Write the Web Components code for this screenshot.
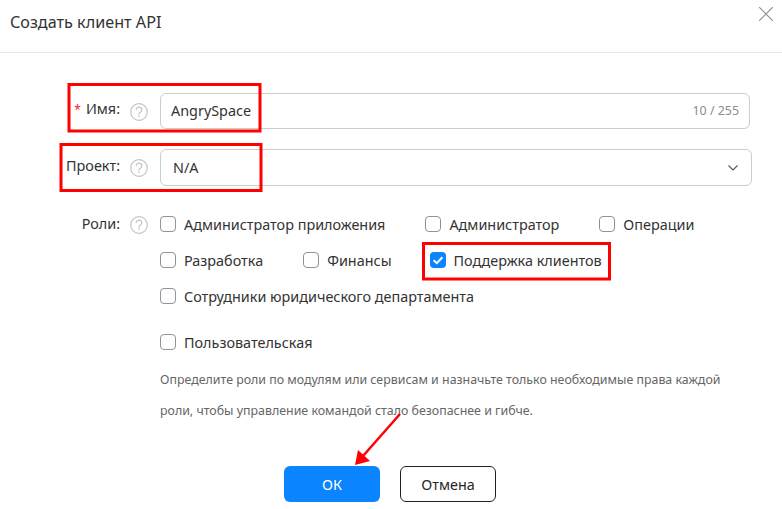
<!DOCTYPE html>
<html lang="ru">
<head>
<meta charset="utf-8">
<title>Создать клиент API</title>
<style>
  html, body { margin: 0; background: #fff; }
  body { font-family: "Noto Sans", "Open Sans", sans-serif; overflow: hidden; }
</style>
</head>
<body>
<api-dialog>
  <form-row label="Имя:" required>
    <text-field value="AngrySpace" count="10 / 255"></text-field>
  </form-row>
  <form-row label="Проект:" gap>
    <select-field value="N/A"></select-field>
  </form-row>
  <form-row label="Роли:" class="roles">
    <role-list>
      <role-check>Администратор приложения</role-check>
      <role-check>Администратор</role-check>
      <role-check>Операции</role-check>
      <role-check>Разработка</role-check>
      <role-check style="margin-right:-2px">Финансы</role-check>
      <role-check checked>Поддержка клиентов</role-check>
      <role-check>Сотрудники юридического департамента</role-check>
    </role-list>
    <custom-role>
      <role-check>Пользовательская</role-check>
      <span slot="hint">Определите роли по модулям или сервисам и назначьте только необходимые права каждой роли, чтобы управление командой стало безопаснее и гибче.</span>
    </custom-role>
  </form-row>
</api-dialog>
<mark-up></mark-up>

<script>
class ApiDialog extends HTMLElement {
  constructor() {
    super();
    this.attachShadow({ mode: 'open' });
    this.shadowRoot.innerHTML = `
      <style>
        :host { display: block; width: 782px; height: 509px; color: #262626; }
        header {
          height: 52px;
          border-bottom: 1px solid #e8e8e8;
          display: flex;
          justify-content: space-between;
          padding: 0 9px 0 10px;
        }
        h1 { margin: 12px 0 0; font-size: 16.2px; font-weight: 400; line-height: 20px; color: #333; }
        svg { margin: 7px 0 0; }
        main { padding: 40px 32px 0 0; }
        footer { display: flex; justify-content: center; gap: 20px; margin-top: 40px; padding-right: 2px; }
        button {
          width: 96px;
          height: 36px;
          box-sizing: border-box;
          border-radius: 6px;
          font: inherit;
          font-size: 14.4px;
          padding: 0;
        }
        .ok { background: #0a84ff; border: 0; color: #fff; }
        .cancel { background: #fff; border: 1px solid #222; color: #262626; }
      </style>
      <header>
        <h1>Создать клиент API</h1>
        <svg width="14" height="14" viewBox="0 0 14 14" fill="none" stroke="#8c8c8c" stroke-width="1.1"><path d="M0 0 14 14M14 0 0 14"/></svg>
      </header>
      <main><slot></slot></main>
      <footer>
        <button class="ok">ОК</button>
        <button class="cancel">Отмена</button>
      </footer>
    `;
  }
}

class FormRow extends HTMLElement {
  constructor() {
    super();
    this.attachShadow({ mode: 'open' });
  }
  connectedCallback() {
    const star = this.hasAttribute('required') ? '<i>*</i>' : '';
    this.shadowRoot.innerHTML = `
      <style>
        :host { display: grid; grid-template-columns: 120px 40px 1fr; margin-bottom: 20px; }
        :host([gap]) { margin-bottom: 28px; }
        label { text-align: right; font-size: 14.4px; line-height: 20px; padding-top: 6px; color: #333; }
        :host([gap]) label { padding-top: 7px; }
        :host(.roles) label { padding-top: 0; }
        i { color: #f5222d; font-style: normal; font-size: 12px; margin-right: 5px; }
        .help { padding: 10px 0 0 10px; }
        :host(.roles) .help { padding-top: 2px; }
        svg { display: block; }
      </style>
      <label>${star}${this.getAttribute('label')}</label>
      <div class="help">
        <svg width="18" height="18" viewBox="0 0 18 18" fill="none" stroke="#c4c4c4" stroke-width="1.2">
          <circle cx="9" cy="9" r="8.3"/>
          <path d="M6.2 7C6.2 5.3 7.5 4.2 9 4.2s2.8 1 2.8 2.6c0 1.2-.8 1.8-1.6 2.4-.8.5-1.2 1-1.2 1.9v.7"/>
          <path d="M9 12.6v1.6"/>
        </svg>
      </div>
      <div><slot></slot></div>
    `;
  }
}

class TextField extends HTMLElement {
  constructor() {
    super();
    this.attachShadow({ mode: 'open' });
  }
  connectedCallback() {
    this.shadowRoot.innerHTML = `
      <style>
        :host {
          display: flex;
          align-items: center;
          justify-content: space-between;
          height: 36px;
          box-sizing: border-box;
          border: 1px solid #ccc;
          border-radius: 6px;
          padding: 0 10px 2px 10px;
          font-size: 14.4px;
          color: #333;
        }
        small { font-size: 12.4px; color: #8c8c8c; }
      </style>
      <span>${this.getAttribute('value')}</span>
      <small>${this.getAttribute('count')}</small>
    `;
  }
}

class SelectField extends HTMLElement {
  constructor() {
    super();
    this.attachShadow({ mode: 'open' });
  }
  connectedCallback() {
    this.shadowRoot.innerHTML = `
      <style>
        :host {
          display: flex;
          align-items: center;
          justify-content: space-between;
          height: 37px;
          margin-right: -2px;
          box-sizing: border-box;
          border: 1px solid #ccc;
          border-radius: 6px;
          padding: 0 13px 0 12px;
          font-size: 14.4px;
          color: #333;
        }
      </style>
      <span>${this.getAttribute('value')}</span>
      <svg width="10" height="6" viewBox="0 0 10 6" fill="none" stroke="#555" stroke-width="1.1"><path d="M.5.5 5 5 9.5.5"/></svg>
    `;
  }
}

class RoleList extends HTMLElement {
  constructor() {
    super();
    this.attachShadow({ mode: 'open' });
    this.shadowRoot.innerHTML = `
      <style>
        :host { display: flex; flex-wrap: wrap; column-gap: 40px; row-gap: 16px; width: 580px; }
      </style>
      <slot></slot>
    `;
  }
}

class RoleCheck extends HTMLElement {
  constructor() {
    super();
    this.attachShadow({ mode: 'open' });
  }
  connectedCallback() {
    const tick = this.hasAttribute('checked')
      ? '<svg width="16" height="16" viewBox="0 0 16 16" fill="none" stroke="#fff" stroke-width="2"><path d="M3.6 8.2 6.8 11.2 12.4 5.2"/></svg>'
      : '';
    this.shadowRoot.innerHTML = `
      <style>
        :host { display: flex; align-items: center; gap: 8px; height: 20px; font-size: 14.4px; color: #333; white-space: nowrap; }
        .box { width: 16px; height: 16px; box-sizing: border-box; border: 1px solid #8f9299; border-radius: 4px; }
        :host([checked]) .box { background: #0a84ff; border: 0; }
      </style>
      <span class="box">${tick}</span>
      <slot></slot>
    `;
  }
}

class CustomRole extends HTMLElement {
  constructor() {
    super();
    this.attachShadow({ mode: 'open' });
    this.shadowRoot.innerHTML = `
      <style>
        :host { display: block; margin-top: 26px; }
        p { margin: 12px 0 0; width: 566px; font-size: 12.4px; line-height: 31px; color: #666; }
      </style>
      <slot></slot>
      <p><slot name="hint"></slot></p>
    `;
  }
}

// red annotations drawn on top of the screenshot
class MarkUp extends HTMLElement {
  constructor() {
    super();
    this.attachShadow({ mode: 'open' });
    this.shadowRoot.innerHTML = `
      <style>
        :host { position: absolute; left: 0; top: 0; width: 782px; height: 509px; pointer-events: none; }
      </style>
      <svg width="782" height="509" fill="none" stroke="#f00" stroke-width="3">
        <rect x="69" y="84.5" width="191" height="46.5"/>
        <rect x="61" y="144.5" width="200" height="46"/>
        <rect x="423.5" y="243.5" width="186" height="35.5"/>
        <path stroke-width="2.5" d="M400 414 363 456"/>
        <path fill="#f00" stroke="none" d="M355 465 358 450 370 461Z"/>
      </svg>
    `;
  }
}

customElements.define('api-dialog', ApiDialog);
customElements.define('form-row', FormRow);
customElements.define('text-field', TextField);
customElements.define('select-field', SelectField);
customElements.define('role-list', RoleList);
customElements.define('role-check', RoleCheck);
customElements.define('custom-role', CustomRole);
customElements.define('mark-up', MarkUp);
</script>
</body>
</html>
